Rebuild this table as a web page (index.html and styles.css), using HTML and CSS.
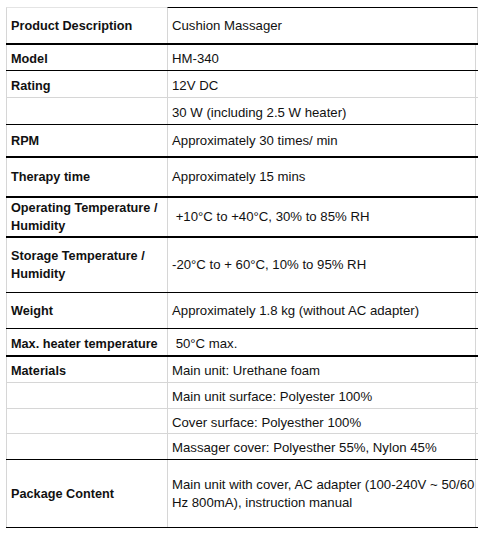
FILE: index.html
```html
<!DOCTYPE html>
<html>
<head>
<meta charset="utf-8">
<link rel="stylesheet" href="styles.css">
</head>
<body>
<div class="sheet">
  <div class="row r-head first">
    <div class="lbl">Product Description</div>
    <div class="val">Cushion Massager</div>
  </div>
  <div class="row r-model line-thin">
    <div class="lbl">Model</div>
    <div class="val">HM-340</div>
  </div>
  <div class="row r-rating line-grey">
    <div class="lbl">Rating</div>
    <div class="val">12V DC</div>
  </div>
  <div class="row r-rating2 line-thin">
    <div class="lbl"></div>
    <div class="val">30 W (including 2.5 W heater)</div>
  </div>
  <div class="row r-rpm line-thick">
    <div class="lbl">RPM</div>
    <div class="val">Approximately 30 times/ min</div>
  </div>
  <div class="row r-therapy line-thick">
    <div class="lbl">Therapy time</div>
    <div class="val">Approximately 15 mins</div>
  </div>
  <div class="row r-oper line-thick">
    <div class="lbl">Operating Temperature /<br>Humidity</div>
    <div class="val">&nbsp;+10°C to +40°C, 30% to 85% RH</div>
  </div>
  <div class="row r-store line-thin">
    <div class="lbl">Storage Temperature /<br>Humidity</div>
    <div class="val">-20°C to + 60°C, 10% to 95% RH</div>
  </div>
  <div class="row r-weight line-thin">
    <div class="lbl">Weight</div>
    <div class="val">Approximately 1.8 kg (without AC adapter)</div>
  </div>
  <div class="row r-max line-thick">
    <div class="lbl">Max. heater temperature</div>
    <div class="val">&nbsp;50°C max.</div>
  </div>
  <div class="row r-mat line-grey">
    <div class="lbl">Materials</div>
    <div class="val">Main unit: Urethane foam</div>
  </div>
  <div class="row r-mat2 line-grey">
    <div class="lbl"></div>
    <div class="val">Main unit surface: Polyester 100%</div>
  </div>
  <div class="row r-mat3 line-grey">
    <div class="lbl"></div>
    <div class="val">Cover surface: Polyesther 100%</div>
  </div>
  <div class="row r-mat4 line-thin">
    <div class="lbl"></div>
    <div class="val">Massager cover: Polyesther 55%, Nylon 45%</div>
  </div>
  <div class="row r-pack line-thin">
    <div class="lbl">Package Content</div>
    <div class="val">Main unit with cover, AC adapter (100-240V ~ 50/60<br>Hz 800mA), instruction manual</div>
  </div>
</div>
</body>
</html>
```
FILE: styles.css
```css
html, body {
  margin: 0;
  padding: 0;
  background: #ffffff;
}

body {
  font-family: "Liberation Sans", Arial, sans-serif;
  color: #111111;
  font-size: 13.2px;
  line-height: 18px;
}

.sheet {
  margin: 7px 0 0 6px;
  width: 472px;
}

.row {
  display: grid;
  grid-template-columns: 161px 311px;
  box-sizing: border-box;
  border-bottom: 1px solid #000;
}

.row.line-thin { border-bottom: 1px solid #000; }
.row.line-thick { border-bottom: 2px solid #000; }
.row.line-grey { border-bottom: 1px solid #d6d6d6; }

.lbl, .val {
  display: flex;
  align-items: center;
  box-sizing: border-box;
  white-space: nowrap;
}

.lbl {
  font-weight: bold;
  font-size: 12.7px;
  padding-left: 4px;
  border-left: 1px solid #d6d6d6;
}

.val {
  padding-left: 4px;
  border-left: 1px solid #d6d6d6;
  border-right: 1px solid #d6d6d6;
  margin-right: 2px;
}

.first .lbl { border-top: 1px solid #e4e4e4; }
.first .val { border-top: 1px solid #000; margin-right: 0; }

.r-head { height: 38px; border-bottom-width: 2px; }
.r-model { height: 26px; }
.r-model .lbl, .r-model .val,
.r-rating .lbl, .r-rating .val,
.r-rating2 .lbl, .r-rating2 .val,
.r-max .lbl, .r-max .val,
.r-mat .lbl, .r-mat .val,
.r-mat2 .lbl, .r-mat2 .val,
.r-mat3 .lbl, .r-mat3 .val,
.r-mat4 .lbl, .r-mat4 .val { padding-top: 3px; }
.r-rating { height: 27px; }
.r-rating2 { height: 27px; }
.r-rpm { height: 33px; }
.r-therapy { height: 40px; }
.r-oper { height: 40px; }
.r-store { height: 55px; }
.r-weight { height: 36px; }
.r-max { height: 28px; }
.r-mat { height: 26px; }
.r-mat2 { height: 26px; }
.r-mat3 { height: 25px; }
.r-mat4 { height: 26px; }
.r-pack { height: 68px; }
```
